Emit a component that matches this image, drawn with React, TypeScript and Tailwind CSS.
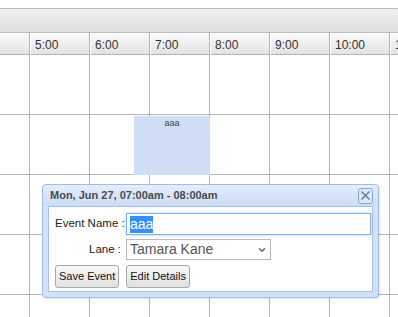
import React from 'react';
import { ChevronDown } from 'lucide-react';

const hours = ['', '5:00', '6:00', '7:00', '8:00', '9:00', '10:00', '11:00'];
const rows = [0, 1, 2, 3, 4];

const App: React.FC = () => {
  return (
    <div className="relative w-[398px] h-[317px] overflow-hidden bg-white font-['Liberation_Sans',Arial,sans-serif]">
      {/* toolbar strip */}
      <div className="mt-[8px] h-[25px] border-y border-[#bdbdbd] bg-gradient-to-b from-[#f1f1f1] to-[#dedede]"></div>

      {/* time grid */}
      <div className="flex ml-[-31px]">
        {hours.map((h, i) => (
          <div key={i} className="w-[60px] shrink-0 border-l border-[#b4b4b4]">
            <div className="h-[22px] border-b border-[#b4b4b4] bg-gradient-to-b from-[#fbfbfb] to-[#e2e2e2] border-l border-l-white pl-[4px] text-[12px] leading-[24px] text-[#333] whitespace-nowrap">
              {h}
            </div>
            {rows.map((r) => (
              <div key={r} className="h-[60px] border-b border-[#b4b4b4]"></div>
            ))}
          </div>
        ))}
      </div>

      {/* event block */}
      <div className="absolute left-[134px] top-[116px] w-[76px] h-[59px] bg-[#cfddf5] text-center text-[9px] leading-[14px] text-[#444]">
        aaa
      </div>

      {/* quick add popup */}
      <div className="absolute left-[42px] top-[184px] w-[337px] h-[114px] rounded-[4px] border border-[#9fbde8] bg-[#d3e2f7] px-[5px] pb-[5px] flex flex-col shadow-[1px_1px_2px_rgba(0,0,0,0.12)]">
        <div className="h-[21px] flex items-center justify-between bg-gradient-to-b from-[#e4eefb] to-[#cbdcf4] -mx-[5px] pl-[7px] pr-[5px] rounded-t-[4px]">
          <span className="text-[11px] font-bold text-[#4a4a4a] whitespace-nowrap">Mon, Jun 27, 07:00am - 08:00am</span>
          <button className="w-[15px] h-[16px] rounded-[3px] border border-[#8aa5cc] bg-[#dce8f8] flex items-center justify-center">
            <svg width="11" height="11" viewBox="0 0 11 11">
              <path d="M1.5 1.5 L9.5 9.5 M9.5 1.5 L1.5 9.5" stroke="#5b7394" strokeWidth="1.3" />
            </svg>
          </button>
        </div>
        <div className="flex-1 bg-white border border-[#a7c1e6] pt-[6px] pl-[6px] pr-[1px] flex flex-col gap-[4px]">
          <div className="flex items-center">
            <span className="w-[71px] shrink-0 text-right pr-[5px] text-[11.5px] text-[#222] whitespace-nowrap">Event Name :</span>
            <div className="w-[245px] h-[22px] border border-[#7fb3ea] shadow-[0_0_3px_rgba(80,150,230,0.5)] flex items-center pl-[3px]">
              <span className="bg-[#3390ff] text-white text-[14px] leading-[17px]">aaa</span>
            </div>
          </div>
          <div className="flex items-center">
            <span className="w-[71px] shrink-0 text-right pr-[5px] text-[11.5px] text-[#222] whitespace-nowrap">Lane :</span>
            <div className="w-[145px] h-[21px] border border-[#b8b8b8] flex items-center justify-between pl-[3px] pr-[3px]">
              <span className="text-[14px] text-[#555]">Tamara Kane</span>
              <ChevronDown size={10} strokeWidth={3.5} className="text-[#666]" />
            </div>
          </div>
          <div className="flex items-center gap-[7px] mt-[1px]">
            <button className="h-[23px] px-[3px] rounded-[3px] border border-[#a8a8a8] bg-gradient-to-b from-[#f8f8f8] to-[#e1e1e1] text-[11px] text-[#111] whitespace-nowrap">Save Event</button>
            <button className="h-[23px] px-[3px] rounded-[3px] border border-[#a8a8a8] bg-gradient-to-b from-[#f8f8f8] to-[#e1e1e1] text-[11px] text-[#111] whitespace-nowrap">Edit Details</button>
          </div>
        </div>
      </div>
    </div>
  );
};

export default App;
